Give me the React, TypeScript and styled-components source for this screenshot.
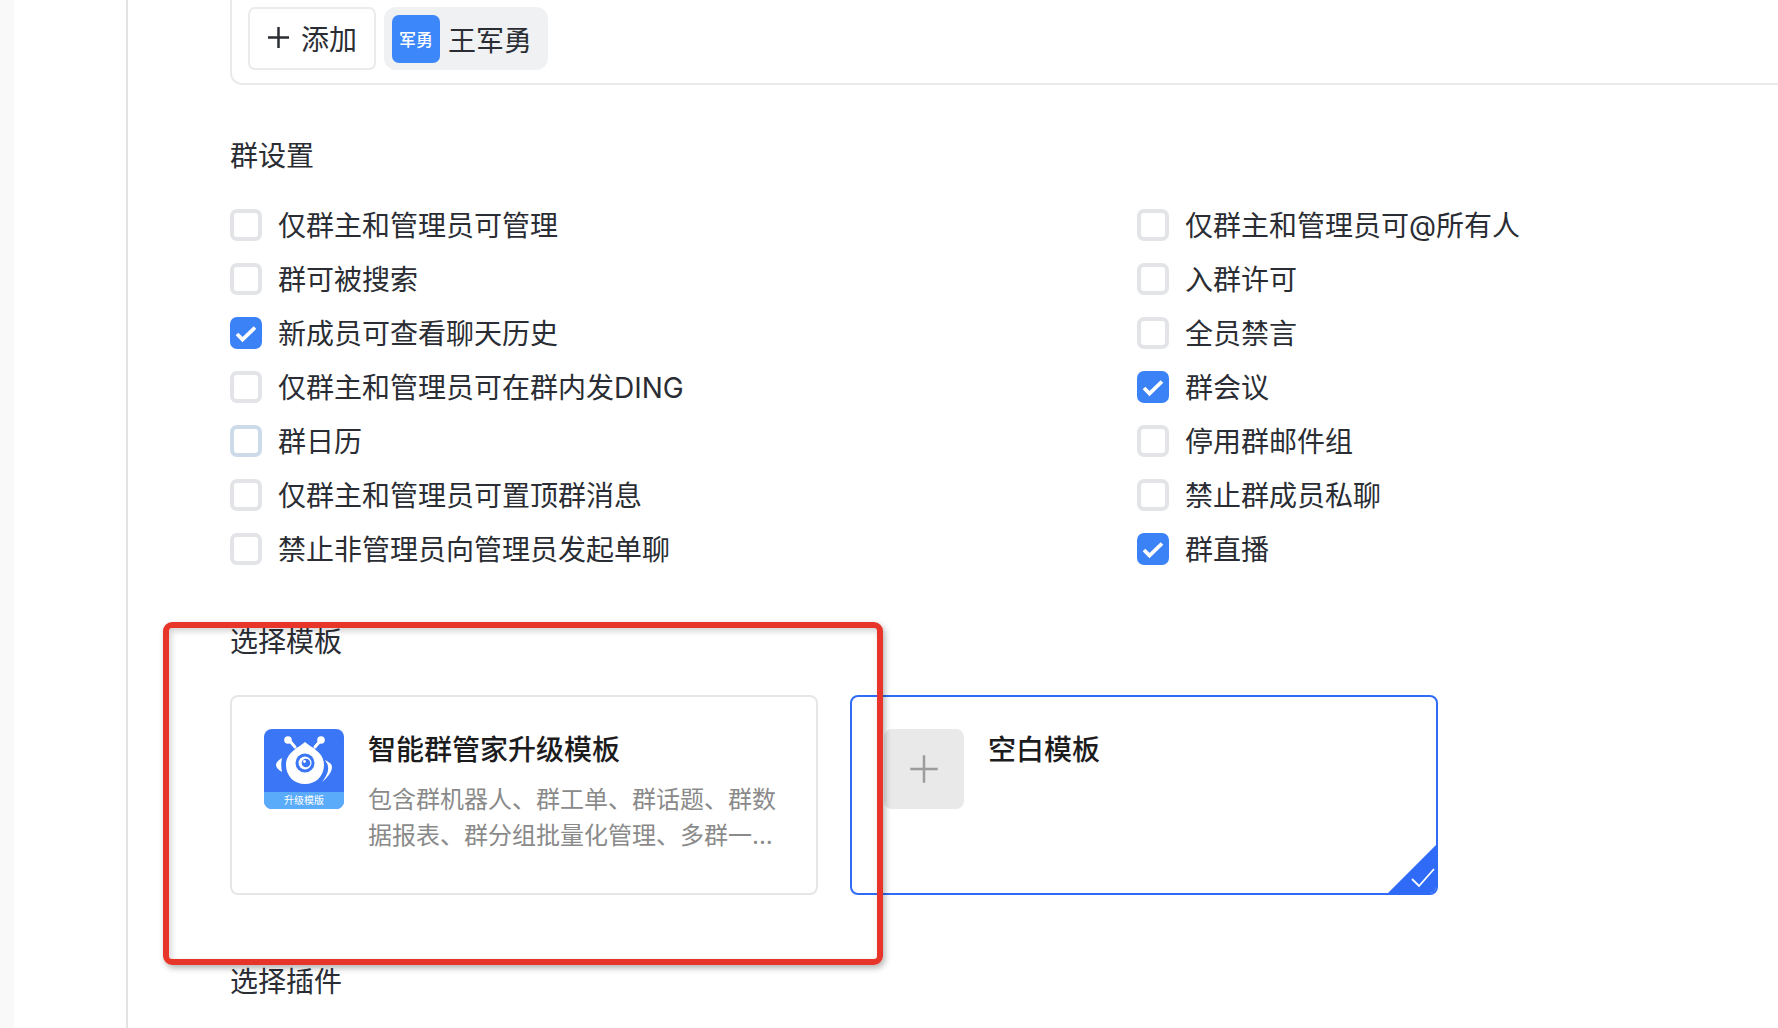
import React from "react";
import styled, { createGlobalStyle } from "styled-components";

const GlobalStyle = createGlobalStyle`
  html, body {
    margin: 0;
    padding: 0;
    background: #fff;
    overflow: hidden;
  }
  * {
    box-sizing: border-box;
  }
`;

const Page = styled.div`
  position: relative;
  display: flex;
  width: 1778px;
  height: 1028px;
  overflow: hidden;
  font-family: Inter, "Noto Sans CJK SC", sans-serif;
  color: #2a2d33;
`;

const SideStrip = styled.div`
  width: 14px;
  background: #f9f9f9;
`;

const SidePanel = styled.div`
  width: 114px;
  border-right: 2px solid #e3e3e3;
`;

const Main = styled.main`
  flex: 1;
  min-width: 0;
  padding-left: 102px;
`;

const MemberBox = styled.div`
  display: flex;
  align-items: flex-start;
  gap: 8px;
  height: 85px;
  margin-right: -20px;
  padding: 7px 0 0 16px;
  border: 2px solid #e9eaec;
  border-top: none;
  border-right: none;
  border-bottom-left-radius: 12px;
`;

const AddButton = styled.div`
  display: flex;
  align-items: center;
  justify-content: center;
  gap: 11px;
  width: 128px;
  height: 63px;
  padding-bottom: 2px;
  border: 2px solid #eaebed;
  border-radius: 7px;
  font-size: 28px;
`;

const MemberTag = styled.div`
  display: flex;
  align-items: center;
  gap: 8px;
  width: 164px;
  height: 63px;
  padding-left: 8px;
  border-radius: 12px;
  background: #f0f1f3;
  font-size: 28px;
`;

const Avatar = styled.div`
  display: flex;
  align-items: center;
  justify-content: center;
  width: 48px;
  height: 48px;
  border-radius: 7px;
  background: #3c87f9;
  color: #fff;
  font-size: 17px;
  font-weight: 500;
`;

const SectionTitle = styled.h3<{ $top: number }>`
  margin: ${(p) => p.$top}px 0 0;
  font-size: 28px;
  font-weight: 400;
  line-height: 40px;
`;

const SettingsGrid = styled.div`
  display: grid;
  grid-template-columns: 907px 1fr;
  grid-auto-rows: 54px;
  margin-top: 21px;
`;

const SettingRow = styled.label`
  display: flex;
  align-items: center;
  gap: 16px;
  font-size: 28px;
  white-space: nowrap;
`;

const CheckBox = styled.span<{ $checked?: boolean; $focus?: boolean }>`
  display: flex;
  align-items: center;
  justify-content: center;
  width: 32px;
  height: 32px;
  flex: none;
  margin-top: 1px;
  border-radius: 7px;
  border: ${(p) =>
    p.$checked ? "none" : `4px solid ${p.$focus ? "#cddaea" : "#e2e4e7"}`};
  background: ${(p) => (p.$checked ? "#3c82f7" : "#fff")};
`;

const TemplateRow = styled.div`
  display: flex;
  gap: 32px;
  margin-top: 33px;
`;

const TemplateCard = styled.div<{ $selected?: boolean }>`
  position: relative;
  display: flex;
  gap: 24px;
  width: 588px;
  height: 200px;
  padding: 32px;
  border: 2px solid ${(p) => (p.$selected ? "#2f6bf6" : "#e6e6e6")};
  border-radius: 8px;
  overflow: hidden;
`;

const LogoTile = styled.div`
  display: flex;
  flex-direction: column;
  width: 80px;
  height: 80px;
  flex: none;
  border-radius: 8px;
  overflow: hidden;
  background: #3b76f6;
`;

const LogoBand = styled.div`
  display: flex;
  align-items: center;
  justify-content: center;
  height: 17px;
  background: #5aabfa;
  color: #fff;
  font-size: 10px;
  line-height: 17px;
`;

const BlankTile = styled.div`
  display: flex;
  align-items: center;
  justify-content: center;
  width: 80px;
  height: 80px;
  flex: none;
  border-radius: 8px;
  background: #e9e9e9;
`;

const CardBody = styled.div`
  min-width: 0;
  padding-top: 1px;
`;

const CardTitle = styled.div`
  font-size: 28px;
  font-weight: 500;
  line-height: 40px;
  color: #1c1c1e;
`;

const CardDesc = styled.div`
  width: 420px;
  margin-top: 12px;
  font-size: 24px;
  line-height: 36px;
  color: #8a8a8a;
`;

const CornerMark = styled.svg`
  position: absolute;
  right: -2px;
  bottom: -2px;
`;

const Annotation = styled.div`
  position: absolute;
  left: 163px;
  top: 622px;
  width: 720px;
  height: 343px;
  border: 6px solid #e8352a;
  border-radius: 9px;
  box-shadow: 2px 3px 6px rgba(0, 0, 0, 0.3),
    inset 2px 3px 6px rgba(0, 0, 0, 0.18);
  pointer-events: none;
`;

const leftSettings = [
  { label: "仅群主和管理员可管理" },
  { label: "群可被搜索" },
  { label: "新成员可查看聊天历史", checked: true },
  { label: "仅群主和管理员可在群内发DING" },
  { label: "群日历", focus: true },
  { label: "仅群主和管理员可置顶群消息" },
  { label: "禁止非管理员向管理员发起单聊" },
];

const rightSettings = [
  { label: "仅群主和管理员可@所有人" },
  { label: "入群许可" },
  { label: "全员禁言" },
  { label: "群会议", checked: true },
  { label: "停用群邮件组" },
  { label: "禁止群成员私聊" },
  { label: "群直播", checked: true },
];

const settingRows = leftSettings.flatMap((item, i) => [item, rightSettings[i]]);

const PlusIcon: React.FC<{ size: number; color: string; weight: number }> = ({
  size,
  color,
  weight,
}) => (
  <svg width={size} height={size} viewBox="0 0 24 24">
    <path
      d="M12 1v22M1 12h22"
      stroke={color}
      strokeWidth={weight}
      fill="none"
    />
  </svg>
);

const RobotLogo = () => (
  <svg width="80" height="63" viewBox="0 0 80 63">
    <path
      d="M41 13c3 3 8 5 12 9 5 4 7 9 7 14 0 11-8 19-19 19s-19-8-19-19c0-5 2-10 7-14 4-4 9-6 12-9z"
      fill="#fff"
    />
    <path
      d="M31 18l-6-7M51 18l6-7"
      stroke="#fff"
      strokeWidth="3"
      strokeLinecap="round"
    />
    <circle cx="24" cy="11" r="3.800" fill="#fff" />
    <circle cx="57" cy="11" r="3.800" fill="#fff" />
    <path d="M18 29c-4 2-6 5-6 7s2 5 6 7c-1-5-1-9 0-14z" fill="#fff" />
    <path
      d="M61 31c4 2 7 4 7 7 0 5-5 11-10 15 3-4 7-10 6-15 0-3-2-5-3-7z"
      fill="#fff"
    />
    <circle cx="41" cy="34" r="9.500" fill="#3b76f6" />
    <circle cx="41" cy="34" r="6.500" fill="#fff" />
    <circle cx="42" cy="34" r="4.300" fill="#3b76f6" />
    <circle cx="40.500" cy="32.500" r="1.400" fill="#fff" />
  </svg>
);

export default function App() {
  return (
    <Page>
      <GlobalStyle />
      <SideStrip />
      <SidePanel />
      <Main>
        <MemberBox>
          <AddButton>
            <PlusIcon size={23} color="#2a2d33" weight={2.600} />
            添加
          </AddButton>
          <MemberTag>
            <Avatar>军勇</Avatar>
            王军勇
          </MemberTag>
        </MemberBox>

        <SectionTitle $top={51}>群设置</SectionTitle>
        <SettingsGrid>
          {settingRows.map((item) => (
            <SettingRow key={item.label}>
              <CheckBox $checked={item.checked} $focus={item.focus}>
                {item.checked && (
                  <svg width="32" height="32" viewBox="0 0 32 32">
                    <path
                      d="M7 17l5.500 5.500L25 10.500"
                      stroke="#fff"
                      strokeWidth="3.800"
                      fill="none"
                    />
                  </svg>
                )}
              </CheckBox>
              {item.label}
            </SettingRow>
          ))}
        </SettingsGrid>

        <SectionTitle $top={47}>选择模板</SectionTitle>
        <TemplateRow>
          <TemplateCard>
            <LogoTile>
              <RobotLogo />
              <LogoBand>升级模版</LogoBand>
            </LogoTile>
            <CardBody>
              <CardTitle>智能群管家升级模板</CardTitle>
              <CardDesc>
                包含群机器人、群工单、群话题、群数据报表、群分组批量化管理、多群一...
              </CardDesc>
            </CardBody>
          </TemplateCard>
          <TemplateCard $selected>
            <BlankTile>
              <PlusIcon size={30} color="#9c9c9c" weight={2} />
            </BlankTile>
            <CardBody>
              <CardTitle>空白模板</CardTitle>
            </CardBody>
            <CornerMark width="52" height="52" viewBox="0 0 52 52">
              <path d="M52 0V52H0z" fill="#2f6bf6" />
              <path
                d="M26 36l7 7 15-17"
                stroke="#fff"
                strokeWidth="1.800"
                fill="none"
              />
            </CornerMark>
          </TemplateCard>
        </TemplateRow>

        <SectionTitle $top={67}>选择插件</SectionTitle>
      </Main>
      <Annotation />
    </Page>
  );
}
